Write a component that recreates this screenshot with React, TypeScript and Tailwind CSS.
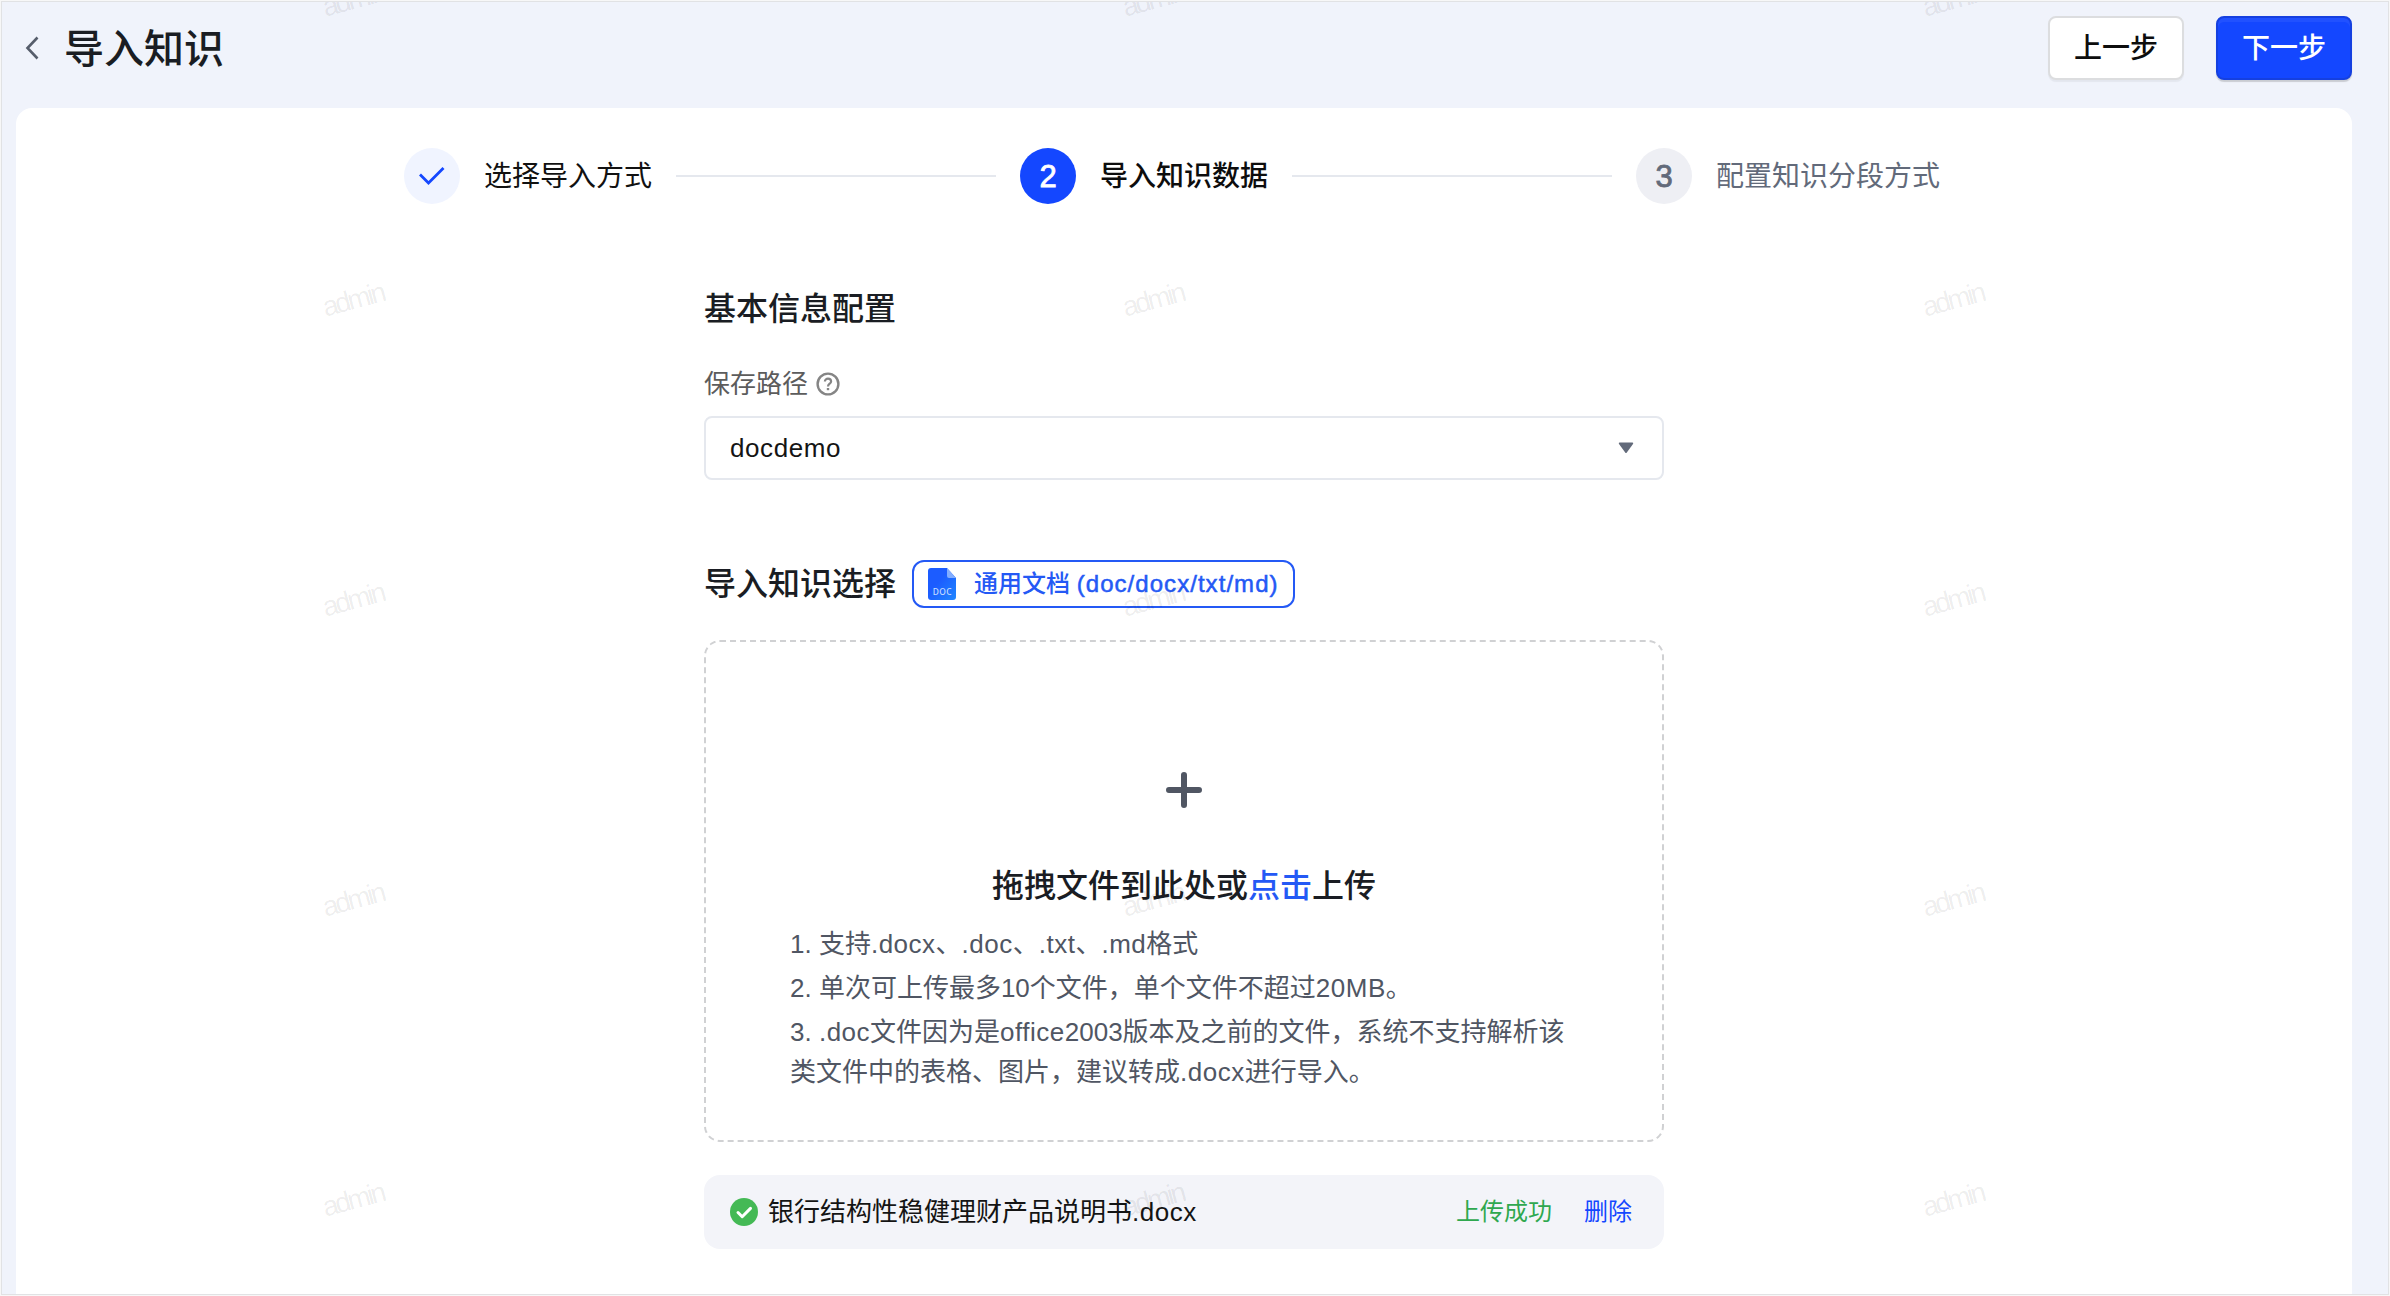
import React from "react";

const watermarkColumns = [356, 1156, 1956];
const watermarkRows = [1, 301, 601, 901, 1201];

function Watermark() {
  return (
    <div className="absolute inset-[2px] overflow-hidden pointer-events-none">
      {watermarkRows.map((y) =>
        watermarkColumns.map((x) => (
          <span
            key={`${x}-${y}`}
            className="absolute -translate-x-1/2 -translate-y-1/2 -rotate-15 text-[28px] leading-none tracking-[-2.9px] text-black/8"
            style={{ left: x - 5, top: y - 3 }}
          >
            admin
          </span>
        ))
      )}
    </div>
  );
}

function Latin({ children }: any) {
  return <span className="tracking-[0.5px]">{children}</span>;
}

function StepLine() {
  return <div className="w-[320px] h-[2px] mx-6 bg-[#e5e8ee]" />;
}

function Header() {
  return (
    <div className="flex items-start justify-between h-[106px] pt-[14px] pl-[22px] pr-9">
      <div className="flex items-center h-16">
        <svg width="16" height="24" viewBox="0 0 16 24" fill="none">
          <path d="M13.5 1.5L3.5 12L13.5 22.5" stroke="#565d6b" strokeWidth="2.6" />
        </svg>
        <h1 className="ml-6 pt-[2px] text-[40px] leading-[62px] font-medium text-[#1a1d23]">
          导入知识
        </h1>
      </div>
      <div className="flex space-x-8">
        <button className="w-[136px] h-16 pt-[2px] rounded-lg border-2 border-[#dcdddf] bg-white text-[28px] leading-[58px] font-medium text-[#0d0d0d] shadow-[0_2px_1px_rgba(0,0,0,0.05)]">
          上一步
        </button>
        <button className="w-[136px] h-16 pt-[2px] rounded-lg border-2 border-[#1540e0] bg-[#1447ff] text-[28px] leading-[58px] font-medium text-white shadow-[0_2px_1px_rgba(0,0,0,0.16),inset_0_4px_0_rgba(255,255,255,0.06)]">
          下一步
        </button>
      </div>
    </div>
  );
}

function Steps() {
  return (
    <div className="flex items-center h-14 pl-[388px] text-[28px] leading-10 whitespace-nowrap">
      <div className="flex items-center justify-center w-14 h-14 rounded-full bg-[#f0f4ff]">
        <svg width="28" height="20" viewBox="0 0 28 20" fill="none">
          <path d="M2 8.5L10.5 17L25.5 2" stroke="#1447ff" strokeWidth="2.8" />
        </svg>
      </div>
      <p className="ml-6 pt-[2px] text-[#111]">选择导入方式</p>
      <StepLine />
      <div className="flex items-center justify-center w-14 h-14 pt-px rounded-full bg-[#1447ff] text-white text-[31px] [-webkit-text-stroke:0.8px_currentColor]">
        2
      </div>
      <p className="ml-6 pt-[2px] font-medium text-[#0d0d0d]">导入知识数据</p>
      <StepLine />
      <div className="flex items-center justify-center w-14 h-14 pt-px rounded-full bg-[#eeeff4] text-[#626a7a] text-[31px] [-webkit-text-stroke:0.8px_currentColor]">
        3
      </div>
      <p className="ml-6 pt-[2px] text-[#626a7a]">配置知识分段方式</p>
    </div>
  );
}

function DocIcon() {
  return (
    <svg width="28" height="32" viewBox="0 0 28 32">
      <defs>
        <linearGradient id="doc" x1="0" y1="0" x2="1" y2="1">
          <stop offset="0.4" stopColor="#1c5cff" />
          <stop offset="1" stopColor="#2088ff" />
        </linearGradient>
      </defs>
      <path
        d="M3 0H19L28 10V29A3 3 0 0 1 25 32H3A3 3 0 0 1 0 29V3A3 3 0 0 1 3 0Z"
        fill="url(#doc)"
      />
      <path d="M19 0L28 10H21A2 2 0 0 1 19 8Z" fill="#83adff" />
      <text
        x="14.3"
        y="27"
        textAnchor="middle"
        fontSize="8.4"
        fontFamily="Noto Sans"
        letterSpacing="0.3"
        fill="#c4dcff"
      >
        DOC
      </text>
    </svg>
  );
}

function UploadBox() {
  return (
    <div className="flex flex-col items-center h-[502px] mt-8 rounded-2xl border-2 border-dashed border-[#d0d1d3]">
      <svg width="36" height="36" viewBox="0 0 36 36" className="mt-[130px]">
        <path
          d="M18 3V33M3 18H33"
          stroke="#505663"
          strokeWidth="6"
          strokeLinecap="round"
        />
      </svg>
      <p className="mt-[54px] text-[32px] leading-[48px] font-medium text-[#1a1d23]">
        拖拽文件到此处或
        <span className="text-[#2459f5] cursor-pointer">点击</span>
        上传
      </p>
      <div className="w-[788px] mt-[14px] space-y-1 text-[26px] leading-10 text-[#505663] whitespace-nowrap">
        <p>
          1. 支持<Latin>.docx</Latin>、<Latin>.doc</Latin>、<Latin>.txt</Latin>
          、<Latin>.md</Latin>格式
        </p>
        <p>
          2. 单次可上传最多10个文件，单个文件不超过<Latin>20MB</Latin>。
        </p>
        <p>
          3. <Latin>.doc</Latin>文件因为是<Latin>office</Latin>
          2003版本及之前的文件，系统不支持解析该
          <br />
          类文件中的表格、图片，建议转成<Latin>.docx</Latin>进行导入。
        </p>
      </div>
    </div>
  );
}

function FileRow() {
  return (
    <div className="flex items-center h-[74px] mt-[33px] pl-[26px] pr-8 rounded-2xl bg-[#f3f4f9] whitespace-nowrap">
      <svg width="28" height="28" viewBox="0 0 28 28" fill="none">
        <circle cx="14" cy="14" r="14" fill="#44b955" />
        <path
          d="M8 14.5L12.2 18.7L20.5 10.4"
          stroke="#fff"
          strokeWidth="3"
          strokeLinecap="round"
          strokeLinejoin="round"
        />
      </svg>
      <p className="ml-[10px] text-[26px] leading-10 text-[#141414]">
        银行结构性稳健理财产品说明书<Latin>.docx</Latin>
      </p>
      <p className="ml-auto text-2xl leading-10 text-[#2fa84f]">上传成功</p>
      <p className="ml-8 text-2xl leading-10 text-[#1447ff] cursor-pointer">
        删除
      </p>
    </div>
  );
}

export default function App() {
  return (
    <div
      lang="zh-CN"
      className="relative w-[2390px] h-[1296px] p-px overflow-hidden bg-[#f7f7f7] font-['Liberation_Sans','Noto_Sans_CJK_SC',sans-serif]"
    >
      <div className="flex flex-col h-full border border-[#e1e2e4] bg-[#f0f3fb]">
        <Header />
        <div className="flex-1 ml-[14px] mr-9 pt-10 rounded-t-2xl bg-white">
          <Steps />
          <div className="w-[960px] mx-auto">
            <h2 className="mt-[81px] text-[32px] leading-[48px] font-medium text-[#1a1d23]">
              基本信息配置
            </h2>
            <div className="flex items-center mt-[31px] text-[26px] leading-10 text-[#5c5c5c]">
              保存路径
              <svg
                width="24"
                height="24"
                viewBox="0 0 24 24"
                fill="none"
                className="ml-2"
              >
                <circle cx="12" cy="12" r="10.4" stroke="#858585" strokeWidth="2.4" />
                <path
                  d="M8.9 9.6C8.9 7.9 10.2 6.7 12 6.7C13.8 6.7 15.1 7.8 15.1 9.4C15.1 11.6 12 11.8 12 14.4"
                  stroke="#858585"
                  strokeWidth="2.2"
                />
                <path d="M12 16V18.2" stroke="#858585" strokeWidth="2.4" />
              </svg>
            </div>
            <div className="flex items-center justify-between h-16 mt-3 pl-6 pr-7 rounded-lg border-2 border-[#e5e8ee]">
              <p className="text-[26px] leading-10 tracking-[0.6px] text-[#141414]">
                docdemo
              </p>
              <svg width="16" height="12" viewBox="0 0 16 12">
                <path
                  d="M1.5 0.5H14.5Q15.8 0.8 15 2L8.8 10.6Q8 11.6 7.2 10.6L1 2Q0.2 0.8 1.5 0.5Z"
                  fill="#626a7a"
                />
              </svg>
            </div>
            <div className="flex items-center h-12 mt-20">
              <h2 className="text-[32px] leading-[48px] font-medium text-[#1a1d23]">
                导入知识选择
              </h2>
              <div className="flex items-center w-[383px] h-12 ml-4 pl-[14px] rounded-xl border-2 border-[#2459f5] text-2xl leading-10 font-medium text-[#2459f5] whitespace-nowrap">
                <DocIcon />
                <p className="ml-[18px]">
                  通用文档{" "}
                  <span className="tracking-[1.05px] [-webkit-text-stroke:0.5px_currentColor]">
                    (doc/docx/txt/md)
                  </span>
                </p>
              </div>
            </div>
            <UploadBox />
            <FileRow />
          </div>
        </div>
      </div>
      <Watermark />
    </div>
  );
}
